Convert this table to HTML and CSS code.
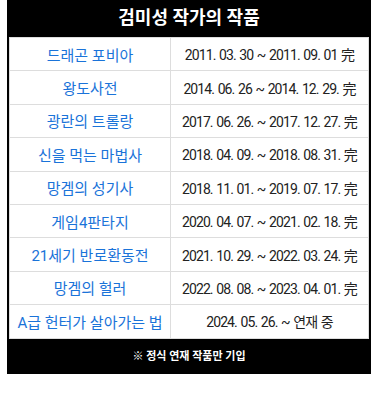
FILE: index.html
```html
<!DOCTYPE html>
<html lang="ko">
<head>
<meta charset="utf-8">
<link rel="stylesheet" href="styles.css">
</head>
<body>
<div class="box">
  <div class="head">검미성 작가의 작품</div>
  <table class="works">
    <tr><td class="t"><a href="#">드래곤 포비아</a></td><td class="d">2011. 03. 30 ~ 2011. 09. 01 完</td></tr>
    <tr><td class="t"><a href="#">왕도사전</a></td><td class="d">2014. 06. 26 ~ 2014. 12. 29. 完</td></tr>
    <tr><td class="t"><a href="#">광란의 트롤랑</a></td><td class="d">2017. 06. 26. ~ 2017. 12. 27. 完</td></tr>
    <tr><td class="t"><a href="#">신을 먹는 마법사</a></td><td class="d">2018. 04. 09. ~ 2018. 08. 31. 完</td></tr>
    <tr><td class="t"><a href="#">망겜의 성기사</a></td><td class="d">2018. 11. 01. ~ 2019. 07. 17. 完</td></tr>
    <tr><td class="t"><a href="#">게임4판타지</a></td><td class="d">2020. 04. 07. ~ 2021. 02. 18. 完</td></tr>
    <tr><td class="t"><a href="#">21세기 반로환동전</a></td><td class="d">2021. 10. 29. ~ 2022. 03. 24. 完</td></tr>
    <tr><td class="t"><a href="#">망겜의 헐러</a></td><td class="d">2022. 08. 08. ~ 2023. 04. 01. 完</td></tr>
    <tr><td class="t"><a href="#">A급 헌터가 살아가는 법</a></td><td class="d">2024. 05. 26. ~ 연재 중</td></tr>
  </table>
  <div class="foot">※ 정식 연재 작품만 기입</div>
</div>
</body>
</html>
```
FILE: styles.css
```css
html, body {
  margin: 0;
  padding: 0;
  background: #fff;
}
body, .works, .works td {
  font-family: Roboto, "Noto Sans CJK KR", sans-serif;
}
.box {
  margin-left: 7px;
  width: 364px;
  background: #000;
  padding: 0 2px;
  box-sizing: border-box;
}
.head {
  height: 37px;
  line-height: 35px;
  color: #fff;
  font-weight: bold;
  font-size: 18px;
  text-align: center;
}
.works {
  width: 100%;
  border-collapse: collapse;
  background: #fff;
}
.works td {
  border: 1px solid #ddd;
  height: 32.4px;
  padding: 0;
  text-align: center;
  font-size: 14px;
  letter-spacing: -0.9px;
  word-spacing: 1px;
  color: #222;
}
.works td.t {
  width: 160px;
}
.works a {
  color: #1a73d9;
  text-decoration: none;
  font-size: 15px;
  letter-spacing: 0;
  word-spacing: 0;
}
.foot {
  height: 35px;
  line-height: 35px;
  color: #fff;
  font-weight: bold;
  font-size: 11px;
  text-align: center;
}
```
